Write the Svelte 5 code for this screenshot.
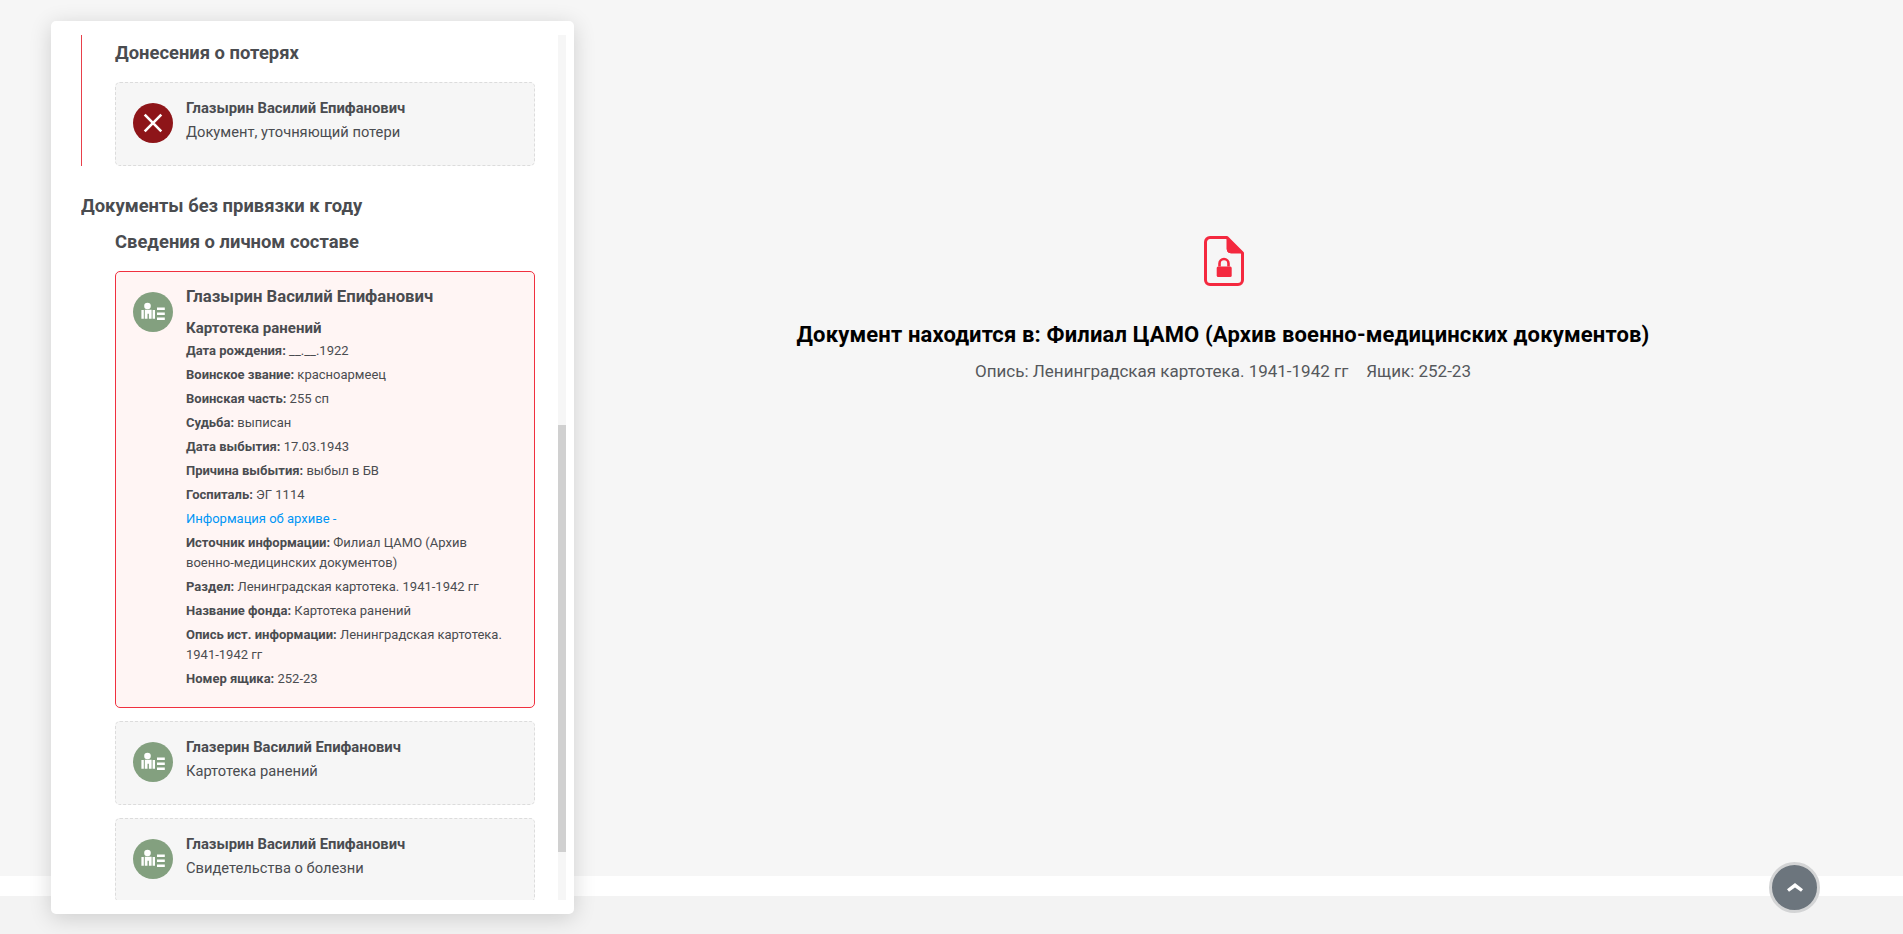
<script>
  const fields = [
    { label: 'Дата рождения:', value: '__.__.1922' },
    { label: 'Воинское звание:', value: 'красноармеец' },
    { label: 'Воинская часть:', value: '255 сп' },
    { label: 'Судьба:', value: 'выписан' },
    { label: 'Дата выбытия:', value: '17.03.1943' },
    { label: 'Причина выбытия:', value: 'выбыл в БВ' },
    { label: 'Госпиталь:', value: 'ЭГ 1114' }
  ];

  const archive = [
    { label: 'Источник информации:', value: 'Филиал ЦАМО (Архив военно-медицинских документов)' },
    { label: 'Раздел:', value: 'Ленинградская картотека. 1941-1942 гг' },
    { label: 'Название фонда:', value: 'Картотека ранений' },
    { label: 'Опись ист. информации:', value: 'Ленинградская картотека. 1941-1942 гг' },
    { label: 'Номер ящика:', value: '252-23' }
  ];

  const others = [
    { name: 'Глазерин Василий Епифанович', type: 'Картотека ранений' },
    { name: 'Глазырин Василий Епифанович', type: 'Свидетельства о болезни' }
  ];
</script>

{#snippet personIcon()}
  <svg class="badge" viewBox="0 0 40 40" aria-hidden="true">
    <circle cx="20" cy="20" r="20" fill="#83a07f" />
    <circle cx="14.500" cy="14" r="3.300" fill="#fff" />
    <path d="M8.400 18h2.400v8.700H8.400zM11.800 17.700h6.800v9h-2.700v-5h-1.400v5h-2.700zM19.600 18H22v8.700h-2.400z" fill="#fff" />
    <path d="M24 15.500h7.800v2.400H24zM24 20.500h7.800v2.400H24zM24 25.500h7.800v2.400H24z" fill="#fff" />
  </svg>
{/snippet}

<div class="page">
  <main class="main">
    <svg class="doc-icon" viewBox="0 0 40 50" aria-hidden="true">
      <path d="M23 1.500H6a4.500 4.500 0 0 0-4.500 4.500v38A4.500 4.500 0 0 0 6 48.500h28a4.500 4.500 0 0 0 4.500-4.500V17z" fill="none" stroke="#f4293f" stroke-width="3" stroke-linejoin="round" />
      <path d="M23 1.500V13a4 4 0 0 0 4 4h11.500z" fill="#f4293f" stroke="#f4293f" stroke-linejoin="round" />
      <path d="M15.500 30.500v-3a4.500 4.500 0 0 1 9 0v3" fill="none" stroke="#f4293f" stroke-width="2.600" />
      <rect x="12.700" y="30.500" width="15" height="10.500" rx="1.500" fill="#f4293f" />
    </svg>
    <h1 class="doc-title">Документ находится в: Филиал ЦАМО (Архив военно-медицинских документов)</h1>
    <p class="doc-sub"><span>Опись: Ленинградская картотека. 1941-1942 гг</span><span>Ящик: 252-23</span></p>
  </main>
  <div class="band"></div>
  <div class="footer"></div>

  <aside class="panel">
    <div class="list">
      <section class="year">
        <h3 class="group">Донесения о потерях</h3>
        <div class="card">
          <svg class="badge" viewBox="0 0 40 40" aria-hidden="true">
            <circle cx="20" cy="20" r="20" fill="#8e1519" />
            <path d="M11.700 11.700l16.600 16.600M28.300 11.700L11.700 28.300" stroke="#fff" stroke-width="2.600" />
          </svg>
          <div class="body">
            <div class="name">Глазырин Василий Епифанович</div>
            <div class="type">Документ, уточняющий потери</div>
          </div>
        </div>
      </section>

      <h2 class="no-year">Документы без привязки к году</h2>
      <h3 class="group tight">Сведения о личном составе</h3>

      <div class="card active">
        {@render personIcon()}
        <div class="body">
          <div class="name big">Глазырин Василий Епифанович</div>
          <div class="kind">Картотека ранений</div>
          {#each fields as f}
            <p class="row"><b>{f.label}</b> {f.value}</p>
          {/each}
          <p class="row link">Информация об архиве -</p>
          {#each archive as f}
            <p class="row"><b>{f.label}</b> {f.value}</p>
          {/each}
        </div>
      </div>

      {#each others as o}
        <div class="card">
          {@render personIcon()}
          <div class="body">
            <div class="name">{o.name}</div>
            <div class="type">{o.type}</div>
          </div>
        </div>
      {/each}
    </div>
    <div class="track"><div class="thumb"></div></div>
  </aside>

  <button class="to-top" aria-label="Наверх">
    <svg viewBox="0 0 16 9" width="16" height="9" aria-hidden="true">
      <path d="M8 0l8 6.200-2 2.600-6-4.400-6 4.400-2-2.600z" fill="#fff" />
    </svg>
  </button>
</div>

<style>
  :global(body) { margin: 0; background: #f6f6f6; }

  .page {
    position: relative;
    height: 934px;
    overflow: hidden;
    display: flex;
    flex-direction: column;
    font-family: Roboto, "Noto Sans", sans-serif;
    color: #4a4c50;
  }

  .main {
    height: 876px;
    box-sizing: border-box;
    padding: 236px 0 0 543px;
    background: #f6f6f6;
    display: flex;
    flex-direction: column;
    align-items: center;
  }
  .band { height: 20px; background: #fff; }
  .footer { flex: 1; background: #f3f3f3; }

  .doc-icon { width: 40px; height: 50px; display: block; margin-left: 2px; }
  .doc-title {
    margin: 35px 0 0;
    font-size: 22px;
    line-height: 28px;
    letter-spacing: 0.15px;
    font-weight: 700;
    color: #000;
  }
  .doc-sub {
    margin: 8px 0 0;
    font-size: 17px;
    line-height: 28px;
    color: #55585c;
    display: flex;
    gap: 18px;
  }

  .panel {
    position: absolute;
    left: 51px;
    top: 21px;
    width: 523px;
    height: 893px;
    box-sizing: border-box;
    padding: 14px 8px 14px 30px;
    background: #fff;
    border-radius: 5px;
    box-shadow: 0 4px 22px rgba(0, 0, 0, 0.16);
    display: flex;
    gap: 23px;
  }

  .list { width: 454px; height: 865px; overflow: hidden; flex-shrink: 0; }

  .year {
    border-left: 1px solid #e8404a;
    padding-left: 33px;
    height: 131px;
  }

  .group {
    margin: 0;
    font-size: 18.400px;
    line-height: 24px;
    padding: 6px 0 17px;
    font-weight: 700;
  }
  .group.tight { padding: 12px 0 17px 34px; }

  .no-year {
    margin: 0;
    padding-top: 28px;
    font-size: 18.400px;
    line-height: 24px;
    font-weight: 700;
  }

  .card {
    box-sizing: border-box;
    width: 420px;
    min-height: 84px;
    margin-bottom: 13px;
    padding: 19px 17px;
    display: flex;
    gap: 13px;
    background: #f6f6f6;
    border: 1px dashed #dcdcdc;
    border-radius: 5px;
  }
  .list > .card { margin-left: 34px; }
  .card.active {
    background: #fff5f4;
    border: 1px solid #f0303f;
    padding-bottom: 14px;
  }

  .badge { width: 40px; height: 40px; flex-shrink: 0; display: block; margin-top: 1px; }

  .body { min-width: 0; }
  .name { font-size: 14.800px; line-height: 20px; margin-top: -4px; font-weight: 700; }
  .name.big { font-size: 16.700px; line-height: 24px; margin-top: -6px; }
  .type { font-size: 14.700px; line-height: 20px; margin-top: 4px; }
  .kind { font-size: 15px; line-height: 20px; margin: 9px 0 3px; font-weight: 700; }

  .row { margin: 0; font-size: 13px; line-height: 20px; padding-bottom: 4px; }
  .row.link { color: #0095f5; }
  .row b { font-weight: 700; }

  .track { width: 9px; height: 865px; background: #f6f6f6; padding-top: 390px; box-sizing: border-box; }
  .thumb { height: 427px; background: #d0d0d0; }

  .to-top {
    position: absolute;
    left: 1769px;
    top: 862px;
    width: 51px;
    height: 51px;
    padding: 0;
    border: 3px solid #d3d4d5;
    border-radius: 50%;
    background: #6c757d;
    display: flex;
    align-items: center;
    justify-content: center;
  }
</style>
